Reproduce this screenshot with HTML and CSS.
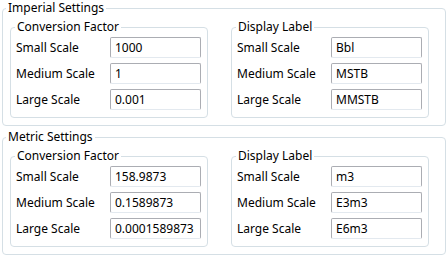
FILE: index.html
```html
<!DOCTYPE html>
<html>
  <head>
    <title>Unit Settings</title>
    <link rel="stylesheet" href="styles.css">
  </head>
  <body>
    <fieldset class="group">
      <legend>Imperial Settings</legend>
      <div class="group-row">
        <fieldset class="subgroup">
          <legend>Conversion Factor</legend>
          <div class="field"><label>Small Scale</label><input class="textbox" value="1000"></div>
          <div class="field"><label>Medium Scale</label><input class="textbox" value="1"></div>
          <div class="field"><label>Large Scale</label><input class="textbox" value="0.001"></div>
        </fieldset>
        <fieldset class="subgroup">
          <legend>Display Label</legend>
          <div class="field"><label>Small Scale</label><input class="textbox" value="Bbl"></div>
          <div class="field"><label>Medium Scale</label><input class="textbox" value="MSTB"></div>
          <div class="field"><label>Large Scale</label><input class="textbox" value="MMSTB"></div>
        </fieldset>
      </div>
    </fieldset>

    <fieldset class="group metric">
      <legend>Metric Settings</legend>
      <div class="group-row">
        <fieldset class="subgroup">
          <legend>Conversion Factor</legend>
          <div class="field"><label>Small Scale</label><input class="textbox" value="158.9873"></div>
          <div class="field"><label>Medium Scale</label><input class="textbox" value="0.1589873"></div>
          <div class="field"><label>Large Scale</label><input class="textbox" value="0.0001589873"></div>
        </fieldset>
        <fieldset class="subgroup">
          <legend>Display Label</legend>
          <div class="field"><label>Small Scale</label><input class="textbox" value="m3"></div>
          <div class="field"><label>Medium Scale</label><input class="textbox" value="E3m3"></div>
          <div class="field"><label>Large Scale</label><input class="textbox" value="E6m3"></div>
        </fieldset>
      </div>
    </fieldset>
  </body>
</html>
```

FILE: styles.css
```css
body {
  margin: 0;
  padding: 0 1px 0 2px;
  font-family: "Noto Sans", sans-serif;
  font-size: 12px;
  color: #000;
  background-color: #fff;
}
fieldset {
  margin: 0;
  min-width: 0;
  border: 1px solid #d5dfe5;
  border-radius: 4px;
}
legend {
  padding: 0 2px;
  line-height: 16px;
}
.group {
  padding: 3px 0 7px 7px;
}
.group legend {
  margin-left: -4px;
}
.metric {
  margin-top: 3px;
}
.group-row {
  display: flex;
  gap: 23px;
}
.subgroup {
  width: 198px;
  box-sizing: border-box;
  padding: 2px 5px 7px 5px;
  display: flex;
  flex-direction: column;
  gap: 5px;
}
.subgroup legend {
  margin-left: -1px;
}
.field {
  display: flex;
  align-items: center;
}
.field label {
  width: 94px;
}
.textbox {
  width: 91px;
  height: 21px;
  box-sizing: border-box;
  margin: 0;
  padding: 0 4px;
  font-family: inherit;
  font-size: 12px;
  color: #000;
  border: 1px solid #abadb3;
  border-bottom-color: #e3e9ef;
  border-radius: 2px;
  outline: none;
}
```
